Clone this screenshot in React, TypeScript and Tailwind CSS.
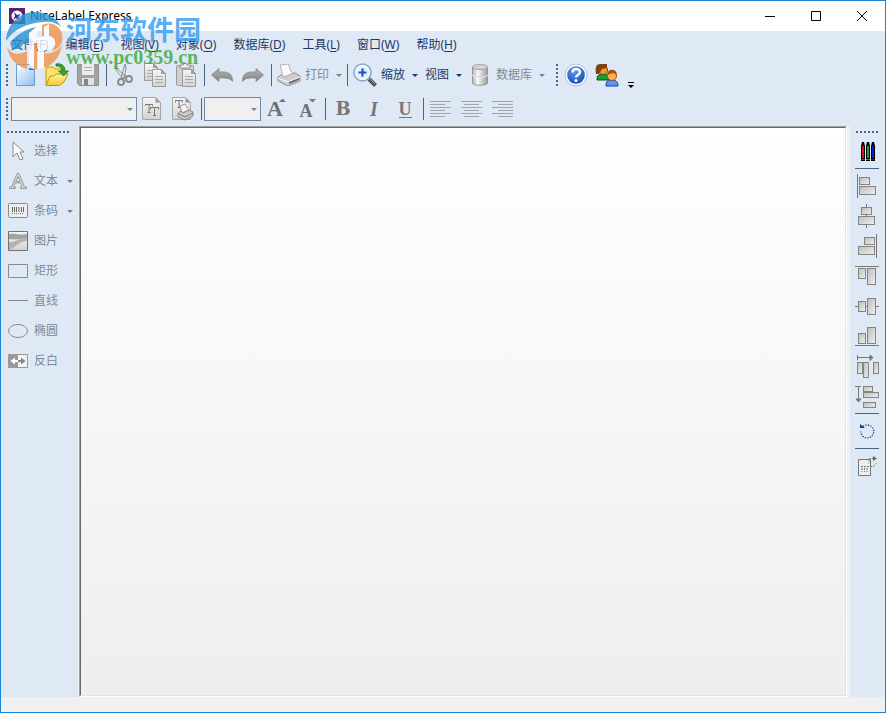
import type { ReactNode } from "react";

const FONT = "font-['Noto_Sans','Noto_Sans_CJK_SC',sans-serif]";

function Caret({ dark = false }: { dark?: boolean }) {
  return (
    <svg width="6" height="3" viewBox="0 0 6 3" className={dark ? "fill-[#1f3864]" : "fill-[#768291]"}>
      <path d="M0 0h6L3 3z" />
    </svg>
  );
}

function Grip() {
  return (
    <svg width="2" height="22" shapeRendering="crispEdges" aria-hidden="true">
      {[0, 4, 8, 12, 16, 20].map((y) => (
        <rect key={y} y={y} width="2" height="2" fill="#4f6785" />
      ))}
    </svg>
  );
}

function FlatGrip({ count }: { count: number }) {
  return (
    <svg width={count * 4 - 2} height="2" shapeRendering="crispEdges" aria-hidden="true">
      {Array.from({ length: count }, (_, i) => (
        <rect key={i} x={i * 4} width="2" height="2" fill="#4f6785" />
      ))}
    </svg>
  );
}

function Sep() {
  return <div className="mx-0.5 h-[22px] w-px shrink-0 bg-[#4d6685]" />;
}

function IconButton({ label, children }: { label: string; children: ReactNode }) {
  return (
    <button type="button" aria-label={label} className="flex h-[30px] w-[31px] shrink-0 items-center justify-center pr-px">
      {children}
    </button>
  );
}

function MenuButton({ text, icon, dark = false }: { text: string; icon?: ReactNode; dark?: boolean }) {
  return (
    <button
      type="button"
      className={`flex h-[30px] shrink-0 items-center pr-[3px] text-xs whitespace-nowrap ${dark ? "text-[#1f3864]" : "text-[#808a97]"}`}
    >
      {icon ? <span className="mr-px flex w-[30px] justify-center">{icon}</span> : <span className="w-1" />}
      <span className="mr-[7px]">{text}</span>
      <Caret dark={dark} />
    </button>
  );
}

function Combo({ label, width }: { label: string; width: string }) {
  return (
    <div className={`relative shrink-0 ${width}`}>
      <select aria-label={label} className="block h-6 w-full appearance-none border border-[#74879d] bg-[#f0f0f0]" />
      <span className="pointer-events-none absolute top-[11px] right-1">
        <Caret />
      </span>
    </div>
  );
}

function Defs() {
  return (
    <svg width="0" height="0" className="absolute" aria-hidden="true">
      <defs>
        <linearGradient id="gray" x1="0" y1="0" x2="1" y2="1">
          <stop offset="0" stopColor="#bcbcbc" />
          <stop offset="1" stopColor="#f0f0f0" />
        </linearGradient>
        <linearGradient id="page" x1="0" y1="0" x2="1" y2="1">
          <stop offset="0" stopColor="#fff" />
          <stop offset="1" stopColor="#8dbdf0" />
        </linearGradient>
        <linearGradient id="sheet" x1="0" y1="0" x2="0" y2="1">
          <stop offset="0" stopColor="#f6f6f6" />
          <stop offset="1" stopColor="#d2d2d2" />
        </linearGradient>
        <linearGradient id="metal" x1="0" y1="0" x2="1" y2="0">
          <stop offset="0" stopColor="#b4b4b4" />
          <stop offset="0.35" stopColor="#fafafa" />
          <stop offset="1" stopColor="#9a9a9a" />
        </linearGradient>
        <linearGradient id="arrow" x1="0" y1="0" x2="0" y2="1">
          <stop offset="0" stopColor="#b5b5b5" />
          <stop offset="1" stopColor="#858585" />
        </linearGradient>
        <linearGradient id="folder" x1="0" y1="0" x2="0" y2="1">
          <stop offset="0" stopColor="#fff3a0" />
          <stop offset="1" stopColor="#f5c935" />
        </linearGradient>
        <radialGradient id="help" cx="0.4" cy="0.3" r="0.8">
          <stop offset="0" stopColor="#5b9af0" />
          <stop offset="1" stopColor="#1643ac" />
        </radialGradient>
      </defs>
    </svg>
  );
}

const NewIcon = () => (
  <svg width="20" height="24" viewBox="0 0 20 24">
    <path d="M.5 1.500h13l5 5v16H.5z" fill="url(#page)" stroke="#6d9bd0" />
    <path d="M13 1v6h6z" fill="#3976bd" />
  </svg>
);
const OpenIcon = () => (
  <svg width="24" height="24" viewBox="0 0 24 24">
    <path d="M1 22V6l2-2h5l2 2h7v5" fill="#ffe36a" stroke="#c7920b" />
    <path d="M1 22.500 5 13h4l2-2h12l-4 8-5 3.500z" fill="url(#folder)" stroke="#c7920b" />
    <path d="M11 1c6-1 9 2 9 7h3.500l-5 5-5-5H17c0-3-2-5-6-5z" fill="#36a832" stroke="#187318" strokeWidth="0.8" />
  </svg>
);
const SaveIcon = () => (
  <svg width="22" height="22" viewBox="0 0 22 22">
    <path d="M.5.500h21v21H2.500l-2-2z" fill="#a3a3a3" stroke="#8f8f8f" />
    <path d="M5 0h12v11H5z" fill="#ececec" />
    <path d="M7 3.500h8M7 6.500h8" stroke="#b2b2b2" />
    <path d="M5 14h12v7H5z" fill="#e3e3e3" />
    <path d="M7 15h4v6H7z" fill="#858585" />
  </svg>
);
const CutIcon = () => (
  <svg width="20" height="24" viewBox="0 0 20 24">
    <path d="M1 3c1 5 4 9 9 12l2-2C8 11 4 7 1 3zM11 1 7 15l3 1 2-11z" fill="#e8e8e8" stroke="#8b8b8b" />
    <g fill="none" stroke="#8b8b8b" strokeWidth="2">
      <circle cx="7" cy="19" r="3" />
      <circle cx="15" cy="16" r="3" />
    </g>
  </svg>
);
const pageShape = (x: number, y: number) => (
  <g transform={`translate(${x} ${y})`}>
    <path d="M.5.500h9l4 4v13H.5z" fill="url(#sheet)" stroke="#9a9a9a" />
    <path d="M9.500.500v4h4z" fill="#a7a7a7" stroke="#9a9a9a" />
    <path d="M3 7.500h8M3 10.500h8M3 13.500h8" stroke="#a8a8a8" />
  </g>
);
const CopyIcon = () => (
  <svg width="22" height="24" viewBox="0 0 22 24">
    {pageShape(0, 0)}
    {pageShape(8, 6)}
  </svg>
);
const PasteIcon = () => (
  <svg width="20" height="24" viewBox="0 0 20 24">
    <rect x="0.500" y="2.500" width="17" height="20" rx="1" fill="#cfcfcf" stroke="#9a9a9a" />
    <path d="M4 5V2h3l2-2 2 2h3v3z" fill="#f1f1f1" stroke="#8e8e8e" />
    {pageShape(6, 6)}
  </svg>
);
const UndoIcon = ({ flip = false }: { flip?: boolean }) => (
  <svg width="22" height="16" viewBox="0 0 22 16">
    <path
      transform={flip ? "translate(22 0) scale(-1 1)" : undefined}
      d="M.5 8 8 1.500v3.500c9-.5 13.500 1 13.500 9.500-2-3-6-4-13.500-3.500v3.500z"
      fill="url(#arrow)"
      stroke="#858585"
      strokeWidth="0.8"
    />
  </svg>
);
const PrinterIcon = () => (
  <svg width="24" height="22" viewBox="0 0 24 22">
    <path d="m1 13 5-3 12-1 5 3v5l-12 5-10-5z" fill="#cdcdcd" stroke="#8d8d8d" />
    <path d="m3 1 9-1c0 4 1 7 4 9l-9 4c-3-3-2-8-4-12z" fill="#fafafa" stroke="#b0b0b0" />
    <path d="m1 14 10 4 12-5" fill="none" stroke="#fff" />
    <path d="m12 18 10-4v2l-10 4z" fill="#686868" />
  </svg>
);
const ZoomIcon = () => (
  <svg width="24" height="24" viewBox="0 0 24 24">
    <path d="m16 16 6.500 6.500" stroke="#515151" strokeWidth="4" />
    <path d="m16 15 6 6" stroke="#b0a89e" />
    <circle cx="9.500" cy="9.500" r="8.500" fill="#e3f1ff" stroke="#8aa4cb" strokeWidth="1.600" />
    <circle cx="9.500" cy="9.500" r="7" fill="none" stroke="#fff" />
    <path d="M9.500 5.500v8M5.500 9.500h8" stroke="#2351c1" strokeWidth="2.200" />
  </svg>
);
const DatabaseIcon = () => (
  <svg width="16" height="22" viewBox="0 0 16 22">
    <path d="M.5 3v7.500c0 3 15 3 15 0V3M.5 12v7c0 3 15 3 15 0v-7" fill="url(#metal)" stroke="#979797" />
    <ellipse cx="8" cy="3" rx="7.500" ry="2.500" fill="#d4d4d4" stroke="#a4a4a4" />
    <path d="M1 11.500c2 2 12 2 14 0" fill="none" stroke="#fff" />
  </svg>
);
const HelpIcon = () => (
  <svg width="24" height="24" viewBox="0 0 24 24">
    <circle cx="12" cy="12" r="11" fill="#f4f8ff" stroke="#adc0df" />
    <circle cx="12" cy="12" r="8.800" fill="url(#help)" />
    <path d="M8.500 9.500c0-5 7.500-4.500 7.500-.5 0 3-4 3-4 5.500" fill="none" stroke="#fff" strokeWidth="2.500" />
    <circle cx="12" cy="17.500" r="1.500" fill="#fff" />
  </svg>
);
const UsersIcon = () => (
  <svg width="24" height="24" viewBox="0 0 24 24">
    <path d="M2 17c0-5 2-6 6-6s6 2 6 6z" fill="#13a12b" stroke="#075912" />
    <circle cx="8" cy="7" r="4.500" fill="#f59b35" stroke="#74420c" />
    <path d="M1 11C0 5 1 1 5 1h7v4L7 6l-3 5z" fill="#7b450c" />
    <path d="M11 23c0-5 2-6 6-6s6 2 6 6z" fill="#5795f8" stroke="#113fa3" />
    <circle cx="17" cy="13" r="4.500" fill="#ffae4e" stroke="#9b5512" />
    <path d="M12 12c0-7 10-7 10 0l-4-2z" fill="#a2550c" />
  </svg>
);
const FontIcon = () => (
  <svg width="20" height="24" viewBox="0 0 20 24">
    <path d="M.5.500h13l5 5v17H.5z" fill="url(#sheet)" stroke="#a4a4a4" />
    <path d="M13.500.500v5h5z" fill="#9a9a9a" />
    <path d="M3.500 9V7.500h7V9M7 7.500v8M5.500 15.500h3M8.500 12.500V10.500h8v2M12.500 10.500v8M11 18.500h3" fill="none" stroke="#777" />
  </svg>
);
const PrinterFontIcon = () => (
  <svg width="22" height="24" viewBox="0 0 22 24">
    <path d="M.5.500h13l5 5v17H.5z" fill="url(#sheet)" stroke="#a4a4a4" />
    <path d="M13.500.500v5h5z" fill="#9a9a9a" />
    <path d="M3.500 5.500V3.500h7v2M7 3.500v7M5.500 10.500h3" fill="none" stroke="#777" />
    <path d="m8 9 5-2 4 6-7 3z" fill="#f3f3f3" stroke="#999" />
    <path d="m6 16 3-2 2 2 6-3 4 2v4l-8 4-7-3z" fill="#ccc" stroke="#888" />
    <path d="m7 17 6 3 8-4" fill="none" stroke="#777" />
  </svg>
);
const SizeIcon = ({ up = false }: { up?: boolean }) => (
  <span className="flex h-5 items-end font-['Liberation_Serif',serif] text-[#707070]">
    <span className={up ? "text-[22px] leading-5" : "text-lg leading-4"}>
      <b>A</b>
    </span>
    <svg width="6" height="20" viewBox="0 0 6 20" className="-ml-1 overflow-visible">
      <path d={up ? "M0 3h7L3.500-.5z" : "M0 0h7L3.500 3.500z"} fill="#777" />
    </svg>
  </span>
);
const AlignIcon = ({ mode }: { mode: 0 | 1 | 2 }) => (
  <svg width="22" height="17" shapeRendering="crispEdges">
    {[0, 3, 6, 9, 12, 15].map((y, i) => {
      const width = i % 2 === 0 ? 21 : 15;
      return <rect key={y} x={((21 - width) * mode) / 2} y={y} width={width} height="1" fill="#a1a4a9" />;
    })}
  </svg>
);

type ToolProps = { label: string; children: ReactNode; menu?: boolean };
function Tool({ label, children, menu = false }: ToolProps) {
  return (
    <button type="button" className="flex h-[30px] w-full items-center pr-[5px] pl-[7px] text-xs text-[#808a97]">
      <span className="mr-1.5 flex w-5 justify-center">{children}</span>
      <span className="mr-auto">{label}</span>
      {menu && <Caret />}
    </button>
  );
}

type Box = [number, number, number, number];
function Arrange({ label, boxes, line }: { label: string; boxes: Box[]; line: string }) {
  return (
    <button type="button" aria-label={label} className="flex h-[30px] w-full items-center pl-[5px]">
      <svg width="24" height="24" viewBox="0 0 24 24">
        <path d={line} stroke="#777" fill="#777" />
        {boxes.map(([x, y, w, h], i) => (
          <rect key={i} x={x + 0.5} y={y + 0.5} width={w} height={h} fill="url(#gray)" stroke="#848484" />
        ))}
      </svg>
    </button>
  );
}

const arrange: { label: string; boxes: Box[]; line: string }[] = [
  { label: "左对齐", boxes: [[4, 3, 10, 7], [4, 12, 16, 8]], line: "M2.500 0v24" },
  { label: "水平居中", boxes: [[6, 3, 10, 7], [3, 12, 16, 8]], line: "M11.500 0v24" },
  { label: "右对齐", boxes: [[9, 3, 10, 7], [3, 12, 16, 8]], line: "M21.500 0v24" },
  { label: "顶端对齐", boxes: [[3, 4, 7, 10], [12, 4, 8, 16]], line: "M0 2.500h24" },
  { label: "垂直居中", boxes: [[3, 7, 7, 10], [12, 4, 8, 16]], line: "M0 12.500h24" },
  { label: "底端对齐", boxes: [[3, 9, 7, 10], [12, 3, 8, 16]], line: "M0 21.500h24" },
  { label: "水平分布", boxes: [[2, 8, 5, 11], [8, 8, 5, 15], [18, 8, 5, 11]], line: "M2.500 1v5M2 3.500h14M15 1l3 2.500-3 3z" },
  { label: "垂直分布", boxes: [[8, 2, 9, 5], [8, 8, 15, 5], [8, 18, 12, 5]], line: "M0 2.500h6M3.500 2v14M1 15h5l-2.500 3z" },
];

function SideRule() {
  return <div className="my-0.5 ml-[5px] h-px w-6 bg-[#4d6685]" />;
}

function Watermark() {
  return (
    <div className="pointer-events-none absolute top-[10px] left-1 flex items-start opacity-80">
      <svg width="59" height="60" viewBox="0 0 59 60">
        <path d="M1 30C2 13 14 1 30 1c12 0 22 6 26 15-4-4-10-6-17-5C22 12 9 18 1 30z" fill="#2b93d3" />
        <path d="M5 32C12 23 21 18 31 16l-6 6v10l-7 1-3 5H7z" fill="#2b93d3" />
        <path d="M37 14c10-4 18 1 20 9 2 9-3 15-10 17 3-5 3-12-3-14l-7-1z" fill="#f0924a" />
        <path d="M2 36c4 7 11 9 20 4v18C11 55 4 47 2 36z" fill="#f0924a" />
        <path d="M28 31h4v27l-4 .5zM39 42c8 1 14-2 18-8-2 12-9 20-18 23z" fill="#f0924a" />
        <path d="M24 39V22l8-6v10h7V16l5-3v12c8 1 9 12 0 14h-5v18l-6 1V32h-4v26l-5-1z" fill="#fff" />
      </svg>
      <div className="ml-0.5 whitespace-nowrap">
        <div className="font-['Noto_Sans_CJK_SC',sans-serif] text-[27px] leading-9 font-bold text-[#349bf0]">河东软件园</div>
        <div className="font-['Liberation_Serif',serif] text-xl leading-5 font-bold text-[#3aa83a]">www.pc0359.cn</div>
      </div>
    </div>
  );
}

const menus = [
  ["文件", "F"],
  ["编辑", "E"],
  ["视图", "V"],
  ["对象", "O"],
  ["数据库", "D"],
  ["工具", "L"],
  ["窗口", "W"],
  ["帮助", "H"],
];

export default function App() {
  return (
    <div className={`relative flex min-h-screen flex-col border border-[#1883d7] bg-[#f0f0f0] ${FONT}`}>
      <Defs />
      <header className="flex h-[30px] items-center bg-white pl-2">
        <svg width="16" height="16" viewBox="0 0 16 16">
          <path d="M0 0h16v16H0z" fill="#54256b" />
          <circle cx="8" cy="8" r="5.500" fill="#fff" />
          <path d="m5 4 3 3 4-1-3 3 2 4-4-3-3 2 2-4z" fill="#54256b" />
        </svg>
        <h1 className="ml-[5px] text-xs text-black">NiceLabel Express</h1>
        <div className="ml-auto flex">
          <button type="button" aria-label="最小化" className="flex h-[30px] w-[46px] items-center justify-center">
            <svg width="10" height="10"><path d="M0 5.500h10" stroke="#000" /></svg>
          </button>
          <button type="button" aria-label="最大化" className="flex h-[30px] w-[46px] items-center justify-center">
            <svg width="10" height="10"><path d="M.5.500h9v9h-9z" fill="none" stroke="#000" /></svg>
          </button>
          <button type="button" aria-label="关闭" className="flex h-[30px] w-[46px] items-center justify-center">
            <svg width="10" height="10"><path d="m0 0 10 10M10 0 0 10" stroke="#000" /></svg>
          </button>
        </div>
      </header>

      <nav className="flex h-[27px] items-center gap-px bg-[#dfe9f5] pl-0.5 text-xs text-[#1f3864]">
        {menus.map(([name, key]) => (
          <button type="button" key={key} className="h-full px-2 whitespace-nowrap">
            {name}(<span className="underline underline-offset-2">{key}</span>)
          </button>
        ))}
      </nav>

      <div className="flex h-[34px] items-center bg-[#dfe9f5] pl-[5px]">
        <Grip />
        <div className="w-[3px]" />
        <IconButton label="新建"><NewIcon /></IconButton>
        <IconButton label="打开"><OpenIcon /></IconButton>
        <IconButton label="保存"><SaveIcon /></IconButton>
        <Sep />
        <IconButton label="剪切"><CutIcon /></IconButton>
        <IconButton label="复制"><CopyIcon /></IconButton>
        <IconButton label="粘贴"><PasteIcon /></IconButton>
        <Sep />
        <IconButton label="撤消"><UndoIcon /></IconButton>
        <IconButton label="重做"><UndoIcon flip /></IconButton>
        <Sep />
        <MenuButton text="打印" icon={<PrinterIcon />} />
        <Sep />
        <MenuButton text="缩放" icon={<ZoomIcon />} dark />
        <MenuButton text="视图" dark />
        <MenuButton text="数据库" icon={<DatabaseIcon />} />
        <div className="w-2" />
        <Grip />
        <div className="w-[3px]" />
        <IconButton label="帮助"><HelpIcon /></IconButton>
        <IconButton label="用户"><UsersIcon /></IconButton>
        <button type="button" aria-label="更多按钮" className="flex h-[30px] w-4 items-end justify-center pb-0.5">
          <svg width="6" height="6"><path d="M0 0h6v1H0zM0 3h6L3 6z" /></svg>
        </button>
      </div>

      <div className="flex h-[34px] items-center bg-[#dfe9f5] pl-[5px]">
        <Grip />
        <div className="w-[3px]" />
        <Combo label="字体" width="w-[126px]" />
        <IconButton label="字体设置"><FontIcon /></IconButton>
        <IconButton label="打印机字体"><PrinterFontIcon /></IconButton>
        <Sep />
        <Combo label="字号" width="w-[57px]" />
        <IconButton label="增大字号"><SizeIcon up /></IconButton>
        <IconButton label="减小字号"><SizeIcon /></IconButton>
        <Sep />
        <IconButton label="粗体"><span className="font-['DejaVu_Serif',serif] text-lg font-bold text-[#777]">B</span></IconButton>
        <IconButton label="斜体"><span className="font-['Liberation_Serif',serif] text-xl font-bold text-[#777] italic">I</span></IconButton>
        <IconButton label="下划线"><span className="border-b border-[#777] font-['Liberation_Serif',serif] text-lg leading-4 font-bold text-[#777]">U</span></IconButton>
        <Sep />
        <IconButton label="左对齐"><AlignIcon mode={0} /></IconButton>
        <IconButton label="居中"><AlignIcon mode={1} /></IconButton>
        <IconButton label="右对齐"><AlignIcon mode={2} /></IconButton>
      </div>

      <div className="mb-[15px] flex flex-1">
        <aside className="w-[77px] shrink-0 bg-[#dfe9f5]">
          <div className="flex h-[10px] items-end pb-[3px] pl-1.5"><FlatGrip count={16} /></div>
          <Tool label="选择">
            <svg width="14" height="20" viewBox="0 0 14 20">
              <path d="M2 1v15l4-4 3 7 3-1-3-7h4z" fill="#fafafa" stroke="#8c8c8c" />
            </svg>
          </Tool>
          <Tool label="文本" menu>
            <svg width="18" height="18" viewBox="0 0 18 18">
              <path d="M.5 16.500v-1.500h2L8 1.500h2L15.500 15h2v1.500h-6V15H13l-1.300-4H6l-1.300 4h1.800v1.500zM6.700 9.500h4.300L9 4.500z" fill="#d5d5d5" stroke="#8c8c8c" strokeWidth="0.8" fillRule="evenodd" />
            </svg>
          </Tool>
          <Tool label="条码" menu>
            <svg width="20" height="16" viewBox="0 0 20 16">
              <rect x="0.500" y="0.500" width="19" height="14" rx="1" fill="#eee" stroke="#8c8c8c" />
              <path d="M4.500 4v5M6.500 4v5M8.500 4v5M11 4v5M13.500 4v5M15.500 4v5" stroke="#666" />
              <path d="M4 10.500h12" stroke="#777" strokeDasharray="1 1" />
            </svg>
          </Tool>
          <Tool label="图片">
            <svg width="20" height="20" viewBox="0 0 20 20">
              <path d="M.5.500h19v19H.5z" fill="url(#sheet)" stroke="#737373" />
              <path d="M1 3c5-2 8 2 18 0v4C12 8 7 9 1 8z" fill="#a2a2a2" />
              <path d="M1 11C8 12 10 7 19 7v3C11 10 7 17 1 19z" fill="#b5b2b4" />
            </svg>
          </Tool>
          <Tool label="矩形">
            <svg width="20" height="14"><path d="M.5.500h19v13H.5z" fill="none" stroke="#858b93" /></svg>
          </Tool>
          <Tool label="直线">
            <svg width="20" height="2"><path d="M0 .5h20" stroke="#858b93" /></svg>
          </Tool>
          <Tool label="椭圆">
            <svg width="20" height="14"><ellipse cx="10" cy="7" rx="9.500" ry="6.500" fill="none" stroke="#858b93" /></svg>
          </Tool>
          <Tool label="反白">
            <svg width="20" height="14" viewBox="0 0 20 14">
              <path d="M.5.500h19v13H.5z" fill="#f3f3f3" stroke="#999" />
              <path d="M0 0h10v14H0z" fill="#999" />
              <path d="M10 6H7V3.500L2.500 7 7 10.500V8h3z" fill="#fff" />
              <path d="M10 6h3V3.500l4.500 3.500-4.500 3.500V8h-3z" fill="#858585" />
            </svg>
          </Tool>
        </aside>

        <main className="ml-px flex min-w-0 flex-1 border border-t-[#a0a0a0] border-r-white border-b-white border-l-[#a0a0a0]">
          <div className="flex-1 border border-t-[#696969] border-r-[#e3e3e3] border-b-[#e3e3e3] border-l-[#696969] bg-linear-to-b from-white to-[#eeeeee]" />
        </main>

        <aside className="ml-[3px] w-[35px] shrink-0 bg-[#dfe9f5]">
          <div className="flex h-[10px] items-end pb-[3px] pl-1.5"><FlatGrip count={6} /></div>
          <button type="button" aria-label="颜色" className="flex h-[30px] w-full items-center justify-center">
            <svg width="16" height="20" viewBox="0 0 16 20">
              {["#d3131f", "#13a330", "#1714d2"].map((color, i) => (
                <g key={color} transform={`translate(${i * 5 + 1} 0)`}>
                  <path d="M0 20V5l1-4h2l1 4v15z" fill="#000" />
                  <path d="M1 5h2v12H1z" fill={color} />
                  <path d="M0 18.500h4" stroke={color} />
                </g>
              ))}
            </svg>
          </button>
          <SideRule />
          {arrange.map((item) => (
            <Arrange key={item.label} {...item} />
          ))}
          <SideRule />
          <button type="button" aria-label="旋转" className="flex h-[30px] w-full items-center justify-center pr-px">
            <svg width="16" height="16" viewBox="0 0 16 16">
              <path d="M4 3.500a6.500 6.500 0 1 1-2.300 5" fill="none" stroke="#123a99" strokeWidth="1.300" strokeDasharray="1.300 1.300" />
              <path d="M1 1v4h5z" fill="#123a99" />
            </svg>
          </button>
          <SideRule />
          <button type="button" aria-label="标签属性" className="flex h-[30px] w-full items-center justify-center">
            <svg width="20" height="20" viewBox="0 0 20 20">
              <path d="M.5 3.500h12v16H.5z" fill="#eee" stroke="#777" />
              <path d="M3 10.500h8M4 12v4M6.500 12v4M9 12v4" stroke="#777" strokeDasharray="2 1" />
              <path d="M11 7.500V2.500h5M13 10.500h3l3-4" fill="none" stroke="#666" strokeDasharray="1 1" />
              <path d="m15 0 4 2.500L15 5z" fill="#666" />
            </svg>
          </button>
        </aside>
      </div>
      <Watermark />
    </div>
  );
}
